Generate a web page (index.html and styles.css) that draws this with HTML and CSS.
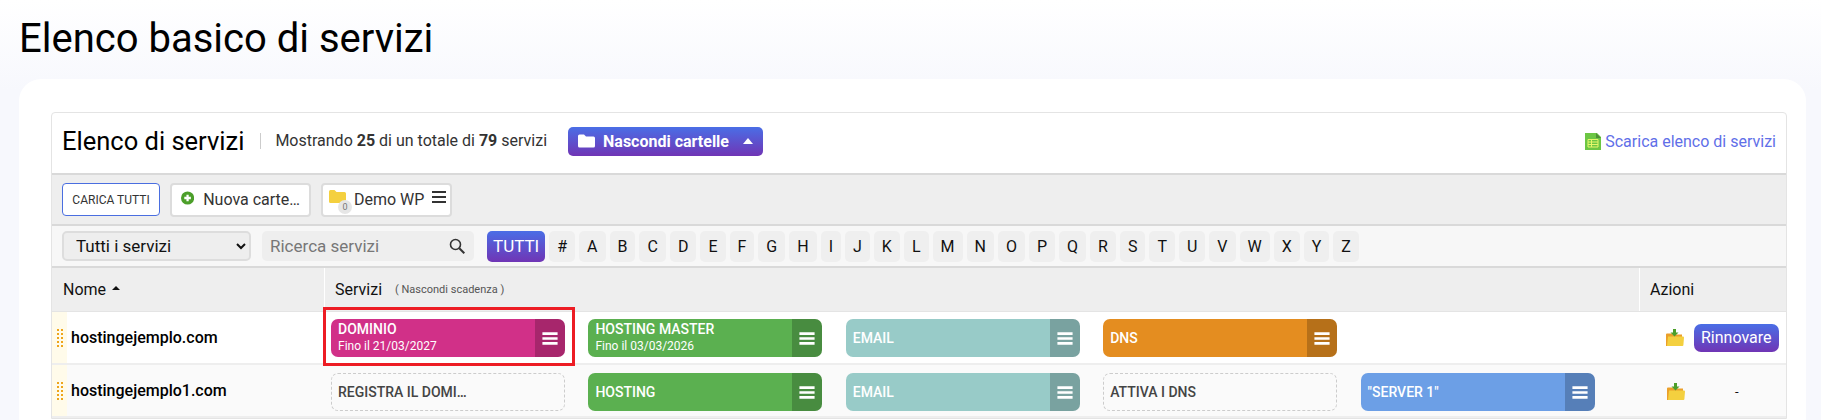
FILE: index.html
```html
<!DOCTYPE html>
<html>
<head>
    <title>Elenco basico di servizi</title>
    <link rel="stylesheet" href="styles.css">
</head>
<body>
    <h1>Elenco basico di servizi</h1>

    <div class="card">
        <div class="panel">
            <div class="panel-head">
                <h2>Elenco di servizi</h2>
                <span class="count">Mostrando <b>25</b> di un totale di <b>79</b> servizi</span>
                <a href="#" class="btn-folders">
                    <svg class="btn-folders-icon" viewBox="0 0 17 14"><path d="M0 2a1.5 1.5 0 0 1 1.5-1.5h4.5l2 2h7.5a1.5 1.5 0 0 1 1.5 1.5v8a1.5 1.5 0 0 1-1.5 1.5h-14a1.5 1.5 0 0 1-1.5-1.5z" fill="#fff"/></svg>
                    Nascondi cartelle
                    <span class="caret-up"></span>
                </a>
                <a href="#" class="download">
                    <svg class="download-icon" viewBox="0 0 16 17"><path d="M0 0h12l4 4v13h-16z" fill="#6cc644"/><path d="M11 0l5 5h-5z" fill="#4f8f35"/><path d="M3 6.500h10v7.500h-10zM3 9h10M3 11.500h10M6.500 6.500v7.500" fill="none" stroke="#e6f76a" stroke-width="1"/></svg>
                    Scarica elenco di servizi
                </a>
            </div>

            <div class="toolbar">
                <button class="btn-load">CARICA TUTTI</button>
                <button class="btn-chip btn-new">
                    <svg class="plus-icon" viewBox="0 0 14 14"><circle cx="7" cy="7" r="7" fill="#4c9f2a"/><path d="M7 3.500v7M3.500 7h7" stroke="#fff" stroke-width="2.400"/></svg>
                    Nuova carte…
                </button>
                <div class="btn-chip btn-folder">
                    <span class="folder-wrap">
                        <svg class="folder-icon" viewBox="0 0 17 13"><path d="M0 1.500a1.500 1.500 0 0 1 1.500-1.500h4l2 2h8a1.500 1.500 0 0 1 1.500 1.500v8a1.500 1.500 0 0 1-1.500 1.500h-14a1.500 1.500 0 0 1-1.500-1.500z" fill="#f4d03f"/></svg>
                        <span class="folder-count">0</span>
                    </span>
                    Demo WP
                    <svg class="menu-dark" viewBox="0 0 14 12"><path d="M0 1h14M0 6h14M0 11h14" stroke="#333" stroke-width="2"/></svg>
                </div>
            </div>

            <div class="filters">
                <select class="filter-select">
                    <option>Tutti i servizi</option>
                </select>
                <div class="search">
                    <span>Ricerca servizi</span>
                    <svg class="search-icon" viewBox="0 0 16 16"><circle cx="6.500" cy="6.500" r="5" fill="none" stroke="#333" stroke-width="1.600"/><path d="M10.300 10.300l5 5" stroke="#333" stroke-width="2"/></svg>
                </div>
                <div class="letters">
                    <a href="#" class="letter active">TUTTI</a>
                    <a href="#" class="letter">#</a>
                    <a href="#" class="letter">A</a>
                    <a href="#" class="letter">B</a>
                    <a href="#" class="letter">C</a>
                    <a href="#" class="letter">D</a>
                    <a href="#" class="letter">E</a>
                    <a href="#" class="letter">F</a>
                    <a href="#" class="letter">G</a>
                    <a href="#" class="letter">H</a>
                    <a href="#" class="letter">I</a>
                    <a href="#" class="letter">J</a>
                    <a href="#" class="letter">K</a>
                    <a href="#" class="letter">L</a>
                    <a href="#" class="letter">M</a>
                    <a href="#" class="letter">N</a>
                    <a href="#" class="letter">O</a>
                    <a href="#" class="letter">P</a>
                    <a href="#" class="letter">Q</a>
                    <a href="#" class="letter">R</a>
                    <a href="#" class="letter">S</a>
                    <a href="#" class="letter">T</a>
                    <a href="#" class="letter">U</a>
                    <a href="#" class="letter">V</a>
                    <a href="#" class="letter">W</a>
                    <a href="#" class="letter">X</a>
                    <a href="#" class="letter">Y</a>
                    <a href="#" class="letter">Z</a>
                </div>
            </div>

            <div class="row row-head">
                <div class="col-name">Nome <span class="caret-up caret-dark"></span></div>
                <div class="col-services">Servizi <small>( Nascondi scadenza )</small></div>
                <div class="col-actions">Azioni</div>
            </div>

            <div class="row">
                <div class="col-name">
                    <span class="drag"><i></i></span>
                    <b>hostingejemplo.com</b>
                </div>
                <div class="col-services">
                    <div class="service magenta">
                        <div class="service-text"><b>DOMINIO</b><span>Fino il 21/03/2027</span></div>
                        <div class="service-menu"><svg viewBox="0 0 14 12"><path d="M0 1.500h14M0 6h14M0 10.500h14" stroke="#fff" stroke-width="2.400"/></svg></div>
                        <div class="highlight"></div>
                    </div>
                    <div class="service green">
                        <div class="service-text"><b>HOSTING MASTER</b><span>Fino il 03/03/2026</span></div>
                        <div class="service-menu"><svg viewBox="0 0 14 12"><path d="M0 1.500h14M0 6h14M0 10.500h14" stroke="#fff" stroke-width="2.400"/></svg></div>
                    </div>
                    <div class="service teal">
                        <div class="service-text"><b>EMAIL</b></div>
                        <div class="service-menu"><svg viewBox="0 0 14 12"><path d="M0 1.500h14M0 6h14M0 10.500h14" stroke="#fff" stroke-width="2.400"/></svg></div>
                    </div>
                    <div class="service orange">
                        <div class="service-text"><b>DNS</b></div>
                        <div class="service-menu"><svg viewBox="0 0 14 12"><path d="M0 1.500h14M0 6h14M0 10.500h14" stroke="#fff" stroke-width="2.400"/></svg></div>
                    </div>
                </div>
                <div class="col-actions">
                    <svg class="move-icon" viewBox="0 0 18 17"><path d="M0 5.500a1 1 0 0 1 1-1h5l1 1h9v11.500h-16z" fill="#eba02a"/><path d="M2 7.500h15a1 1 0 0 1 1 1l-.6 7.500a1 1 0 0 1-1 1h-15.400z" fill="#f4d03f"/><path d="M7 0h3v3.500h2.500l-4 4-4-4h2.500z" fill="#4c9f2a"/></svg>
                    <a href="#" class="btn-renew">Rinnovare</a>
                </div>
            </div>

            <div class="row row-alt">
                <div class="col-name">
                    <span class="drag"><i></i></span>
                    <b>hostingejemplo1.com</b>
                </div>
                <div class="col-services">
                    <div class="service empty"><div class="service-text"><b>REGISTRA IL DOMI…</b></div></div>
                    <div class="service green">
                        <div class="service-text"><b>HOSTING</b></div>
                        <div class="service-menu"><svg viewBox="0 0 14 12"><path d="M0 1.500h14M0 6h14M0 10.500h14" stroke="#fff" stroke-width="2.400"/></svg></div>
                    </div>
                    <div class="service teal">
                        <div class="service-text"><b>EMAIL</b></div>
                        <div class="service-menu"><svg viewBox="0 0 14 12"><path d="M0 1.500h14M0 6h14M0 10.500h14" stroke="#fff" stroke-width="2.400"/></svg></div>
                    </div>
                    <div class="service empty"><div class="service-text"><b>ATTIVA I DNS</b></div></div>
                    <div class="service blue">
                        <div class="service-text"><b>"SERVER 1"</b></div>
                        <div class="service-menu"><svg viewBox="0 0 14 12"><path d="M0 1.500h14M0 6h14M0 10.500h14" stroke="#fff" stroke-width="2.400"/></svg></div>
                    </div>
                </div>
                <div class="col-actions">
                    <svg class="move-icon" viewBox="0 0 18 17"><path d="M0 5.500a1 1 0 0 1 1-1h5l1 1h9v11.500h-16z" fill="#eba02a"/><path d="M2 7.500h15a1 1 0 0 1 1 1l-.6 7.500a1 1 0 0 1-1 1h-15.400z" fill="#f4d03f"/><path d="M7 0h3v3.500h2.500l-4 4-4-4h2.500z" fill="#4c9f2a"/></svg>
                    <span class="no-renew">-</span>
                </div>
            </div>
        </div>
    </div>
</body>
</html>
```

FILE: styles.css
```css
html, body {
    height: 420px;
    overflow: hidden;
}
body {
    margin: 0;
    font-family: Roboto, sans-serif;
    font-size: 16px;
    color: #111;
    background: linear-gradient(#fff 0, #f7f8fd 90px);
}
h1 {
    margin: 0;
    padding: 16px 0 0 19px;
    height: 79px;
    box-sizing: border-box;
    font-size: 40px;
    line-height: 46px;
    font-weight: 400;
    color: #000;
}
.card {
    margin: 0 15px 0 19px;
    padding: 33px 19px 20px 32px;
    background: #fff;
    border-radius: 22px;
}
.panel {
    border: 1px solid #e4e4e4;
    border-radius: 4px 4px 0 0;
}

.panel-head {
    display: flex;
    align-items: center;
    height: 56px;
    padding: 0 10px 4px;
    border-bottom: 2px solid #d9d9d9;
}
h2 {
    margin: 0;
    font-size: 25.500px;
    font-weight: 400;
    color: #000;
}
.count {
    margin-left: 16px;
    padding-left: 14px;
    border-left: 1px solid #ccc;
    line-height: 16px;
    color: #333;
}
.btn-folders {
    display: flex;
    align-items: center;
    height: 29px;
    margin-left: 21px;
    padding: 0 10px;
    background: linear-gradient(#4a6ee6, #7035b5);
    border-radius: 5px;
    color: #fff;
    font-weight: 700;
    text-decoration: none;
}
.btn-folders-icon {
    width: 17px;
    height: 14px;
    margin-right: 8px;
}
.caret-up {
    display: inline-block;
    margin-left: 14px;
    border-left: 5px solid transparent;
    border-right: 5px solid transparent;
    border-bottom: 6px solid #fff;
}
.caret-dark {
    margin-left: 6px;
    margin-bottom: 3px;
    border-left-width: 4px;
    border-right-width: 4px;
    border-bottom: 4px solid #111;
}
.download {
    display: flex;
    align-items: center;
    margin-left: auto;
    color: #5f6fe8;
    text-decoration: none;
}
.download-icon {
    width: 16px;
    height: 17px;
    margin-right: 4px;
}

.toolbar {
    display: flex;
    align-items: center;
    gap: 10px;
    height: 51px;
    padding: 0 10px;
    background: #eee;
    border-bottom: 2px solid #d9d9d9;
    box-sizing: border-box;
}
.btn-load {
    width: 98px;
    height: 33px;
    padding: 0;
    background: #fff;
    border: 1px solid #4a6ee0;
    border-radius: 4px;
    font-family: inherit;
    font-size: 12px;
    color: #333;
}
.btn-chip {
    display: flex;
    align-items: center;
    height: 34px;
    box-sizing: border-box;
    background: #fff;
    border: 2px solid #dcdcdc;
    border-radius: 4px;
    font-family: inherit;
    font-size: 16px;
    color: #333;
    white-space: nowrap;
}
.btn-new {
    width: 141px;
    padding: 0 9px;
}
.plus-icon {
    width: 14px;
    height: 14px;
    margin: -4px 9px 0 0;
}
.btn-folder {
    width: 131px;
    padding: 0 0 0 6px;
}
.folder-wrap {
    position: relative;
    display: block;
    width: 25px;
    height: 13px;
    margin-top: -6px;
}
.folder-icon {
    display: block;
    width: 17px;
    height: 13px;
}
.folder-count {
    position: absolute;
    left: 9px;
    top: 10px;
    width: 14px;
    height: 14px;
    background: #e6e6e6;
    border-radius: 50%;
    font-size: 9px;
    line-height: 14px;
    text-align: center;
    color: #777;
}
.menu-dark {
    width: 14px;
    height: 12px;
    margin: -6px 0 0 8px;
}

.filters {
    display: flex;
    align-items: flex-start;
    height: 42px;
    padding: 5px 10px 0;
    background: #f7f7f7;
    border-bottom: 2px solid #d9d9d9;
    box-sizing: border-box;
}
.filter-select {
    width: 189px;
    height: 30px;
    padding: 0 0 0 8px;
    background: #eee;
    border: 2px solid #ddd;
    border-radius: 5px;
    font-family: inherit;
    font-size: 17px;
    color: #111;
}
.search {
    display: flex;
    align-items: center;
    justify-content: space-between;
    width: 212px;
    height: 30px;
    margin-left: 11px;
    padding: 0 9px 0 8px;
    box-sizing: border-box;
    background: #eee;
    border-radius: 5px;
    font-size: 17px;
    color: #777;
}
.search-icon {
    width: 16px;
    height: 16px;
}
.letters {
    display: flex;
    gap: 4px;
    margin-left: 13px;
}
.letter {
    height: 31px;
    padding: 0 8px;
    background: #efefef;
    border-radius: 5px;
    line-height: 31px;
    color: #111;
    text-decoration: none;
}
.letter.active {
    padding: 0 6px;
    background: linear-gradient(#4a6ee6, #7035b5);
    color: #fff;
    font-size: 17px;
}

.row {
    display: flex;
    height: 53px;
    box-sizing: border-box;
    border-bottom: 2px solid #eee;
    background: #fff;
}
.row-alt {
    background: #fafafa;
}
.row-head {
    height: 44px;
    background: #eee;
    border-bottom: 1px solid #e4e4e4;
}
.col-name {
    display: flex;
    align-items: center;
    width: 272px;
    flex: none;
    box-sizing: border-box;
}
.col-services {
    flex: 1;
    display: flex;
    align-items: center;
    gap: 23.400px;
    padding: 1px 0 0 7px;
    min-width: 0;
}
.col-actions {
    display: flex;
    align-items: center;
    width: 147px;
    flex: none;
    box-sizing: border-box;
}
.row-alt .col-services {
    padding-top: 3px;
}
.row-alt .col-actions {
    padding: 2px 0 0 1px;
}
.row-head .col-name {
    padding-left: 11px;
}
.row-head .col-services {
    gap: 13px;
    padding: 0 0 0 10px;
    border-left: 1px solid #fff;
}
.row-head .col-actions {
    padding-left: 10px;
    border-left: 1px solid #fff;
}
.row-head small {
    font-size: 11px;
    color: #555;
}
.drag {
    display: flex;
    align-items: center;
    justify-content: center;
    align-self: stretch;
    width: 15px;
    margin-right: 4px;
    background: #fffbea;
}
.drag i {
    display: block;
    width: 2px;
    height: 18px;
    border-left: 2px dotted #eea51c;
    border-right: 2px dotted #eea51c;
}
.col-name b {
    font-weight: 500;
    color: #000;
}

.service {
    position: relative;
    display: flex;
    width: 234px;
    height: 38px;
    flex: none;
    box-sizing: border-box;
    border-radius: 7px;
    color: #fff;
}
.service-text {
    flex: 1;
    display: flex;
    flex-direction: column;
    justify-content: center;
    padding-left: 7px;
    font-size: 12px;
    line-height: 17px;
    min-width: 0;
}
.service-text b {
    font-size: 14px;
    font-weight: 500;
}
.service-menu {
    display: flex;
    align-items: center;
    justify-content: center;
    width: 30px;
    flex: none;
    border-radius: 0 7px 7px 0;
    background: rgba(0, 0, 0, 0.2);
}
.service-menu svg {
    width: 16px;
    height: 13px;
}
.magenta { background: #d13088; }
.green { background: #5bb050; }
.teal { background: #98cbc8; }
.orange { background: #e48d20; }
.blue { background: #6c9fe6; }
.empty {
    border: 1px dashed #ccc;
    color: #444;
}
.empty .service-text {
    padding-left: 6px;
}
.highlight {
    position: absolute;
    left: -8px;
    right: -10px;
    top: -12px;
    bottom: -9px;
    border: 3px solid #ed1c24;
}

.move-icon {
    width: 18px;
    height: 17px;
    margin-left: 27px;
    flex: none;
}
.btn-renew {
    margin-left: 10px;
    padding: 0 7px;
    height: 28px;
    line-height: 27px;
    background: linear-gradient(#4a6ee6, #7035b5);
    border-radius: 7px;
    color: #fff;
    text-decoration: none;
}
.no-renew {
    margin-left: 50px;
    font-size: 13px;
}
```
